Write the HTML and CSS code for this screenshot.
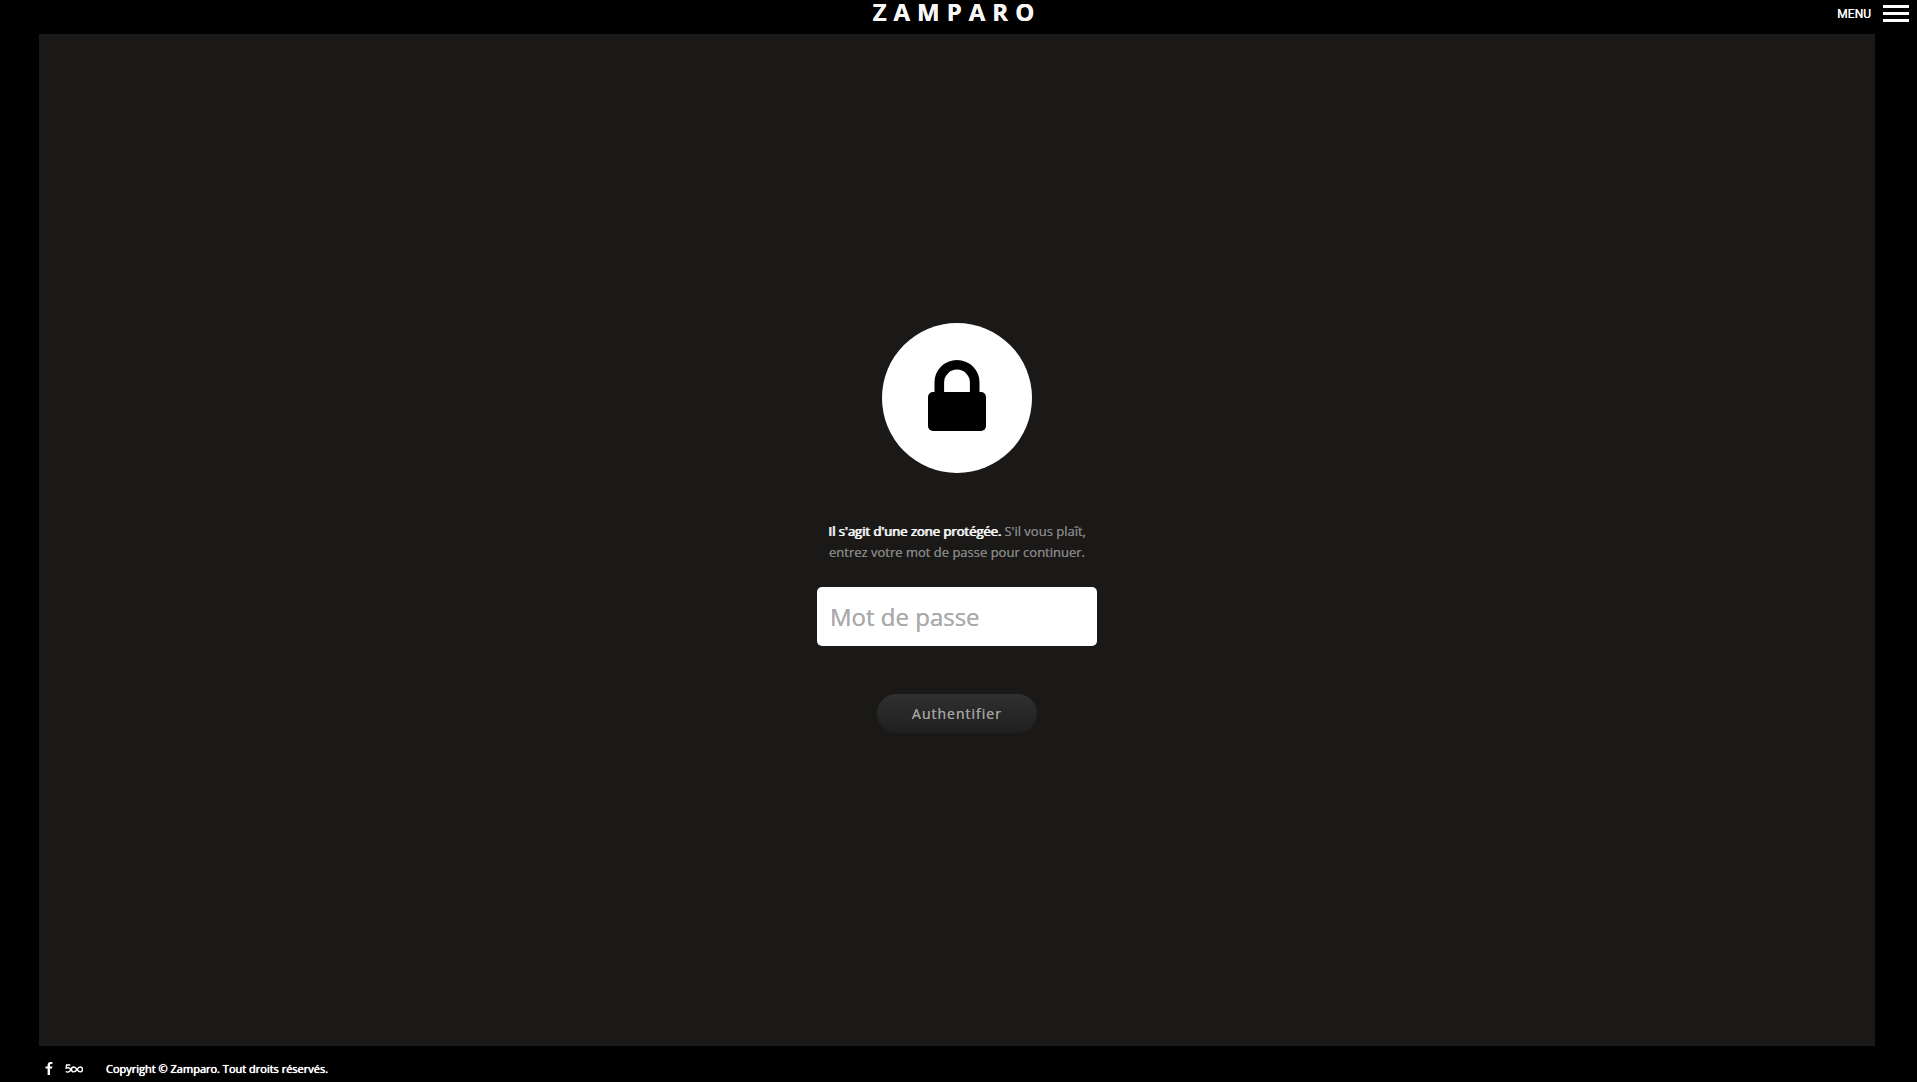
FILE: index.html
```html
<!DOCTYPE html>
<html lang="fr">
<head>
<meta charset="utf-8">
<meta name="viewport" content="width=device-width, initial-scale=1">
<title>Zamparo</title>
<link rel="stylesheet" href="styles.css">
</head>
<body>
<header class="header">
  <a class="logo" href="#">ZAMPARO</a>
  <button class="menu" type="button">
    <span>MENU</span>
    <svg class="menu-bars" viewBox="0 0 26 17" aria-hidden="true"><path d="M0 0h26v3H0zM0 7h26v3H0zM0 14h26v3H0z"/></svg>
  </button>
</header>
<main class="stage">
  <form class="login">
    <div class="badge">
      <svg class="lock" viewBox="0 0 58 71" aria-hidden="true">
        <path d="M11.300 35V22.500a17.700 17.700 0 0 1 35.400 0V35" fill="none" stroke="#000" stroke-width="9.600"/>
        <rect y="32" width="58" height="39" rx="5"/>
      </svg>
    </div>
    <p class="notice"><strong>Il s'agit d'une zone protégée.</strong> S'il vous plaît,<br>entrez votre mot de passe pour continuer.</p>
    <input class="password" type="password" placeholder="Mot de passe" aria-label="Mot de passe">
    <button class="submit" type="submit">Authentifier</button>
  </form>
</main>
<footer class="footer">
  <a class="social" href="#" aria-label="Facebook"><svg class="facebook" viewBox="0 0 8 13" aria-hidden="true"><path d="M7.400 0H5.800C3.700 0 2.600 1.100 2.600 3.200V4.500H.5v2h2.100V13H5V6.500h2l.4-2H5V3.300c0-.8.3-1.200 1.100-1.200h1.300z"/></svg></a>
  <a class="social" href="#" aria-label="500px"><svg class="px500" viewBox="0 0 18 9" aria-hidden="true"><path d="M5.300 1H1.600L1.200 4.200C3.400 3.300 5.500 3.800 5.500 5.600 5.500 8.300 2.200 8.500.7 7.500"/><path d="M12 5.500C10.800 3.800 10 3 8.900 3a2.400 2.400 0 0 0 0 4.900C10 7.900 10.800 7.200 12 5.500S14 3 15.100 3a2.400 2.400 0 0 1 0 4.900C14 7.900 13.200 7.200 12 5.500z"/></svg></a>
  <small class="copyright">Copyright © Zamparo. Tout droits réservés.</small>
</footer>
</body>
</html>
```
FILE: styles.css
```css
* {
  box-sizing: border-box;
}

body {
  margin: 0;
  min-height: 100vh;
  display: flex;
  flex-direction: column;
  background: #000;
  color: #fff;
  font-family: "Open Sans", sans-serif;
  font-size: 13px;
  text-shadow: 0 0 0 currentColor;
}

.header {
  display: grid;
  grid-template-columns: 1fr auto 1fr;
  align-items: start;
  height: 34px;
  padding: 0 8px 0 5px;
}

.logo {
  grid-column: 2;
  color: #f7f7f7;
  font-size: 24px;
  font-weight: 700;
  line-height: 24px;
  letter-spacing: 7px;
  text-decoration: none;
}

.menu {
  justify-self: end;
  display: flex;
  align-items: center;
  gap: 12px;
  height: 27px;
  padding: 0;
  border: 0;
  background: none;
  color: #fff;
  font-family: Roboto, sans-serif;
  font-size: 12px;
  text-shadow: 0 0 0 currentColor;
}

.menu-bars {
  width: 26px;
  height: 17px;
  fill: #fff;
}

.stage {
  flex: 1;
  display: flex;
  align-items: center;
  justify-content: center;
  margin: 0 42px 0 39px;
  padding-bottom: 24px;
  background: #1a1917;
}

.login {
  display: flex;
  flex-direction: column;
  align-items: center;
}

.badge {
  display: flex;
  justify-content: center;
  align-items: center;
  width: 150px;
  height: 150px;
  padding-bottom: 5px;
  border-radius: 50%;
  background: #fff;
}

.lock {
  width: 58px;
  height: 71px;
}

.notice {
  margin: 48px 0 24px;
  color: #848484;
  line-height: 21px;
  text-align: center;
}

.notice strong {
  color: #fff;
  font-weight: 400;
  text-shadow: 1px 0 0 currentColor;
}

.password {
  width: 280px;
  height: 59px;
  padding: 0 13px;
  border: 0;
  border-radius: 5px;
  background: #fff;
  color: #333;
  font: 24px "Open Sans", sans-serif;
  text-shadow: 0 0 0 currentColor;
}

.password::placeholder {
  color: #aaa;
  opacity: 1;
}

.submit {
  width: 160px;
  height: 39px;
  margin-top: 48px;
  padding: 0;
  border: 0;
  border-radius: 20px;
  background: linear-gradient(#303030, #1f1f1f);
  color: #a4a2a2;
  font: 14px "Open Sans", sans-serif;
  letter-spacing: 1px;
  text-shadow: 0 0 0 currentColor;
}

.footer {
  display: flex;
  align-items: center;
  height: 36px;
  padding: 8px 45px 0;
}

.social {
  display: flex;
  margin-right: 12px;
}

.facebook {
  width: 8px;
  height: 13px;
  fill: #fff;
}

.px500 {
  width: 18px;
  height: 9px;
  fill: none;
  stroke: #fff;
  stroke-width: 1.400;
}

.copyright {
  margin-left: 11px;
  font-size: 11px;
  text-shadow: 0 0 0 currentColor, 0 0 1px currentColor;
}
```
